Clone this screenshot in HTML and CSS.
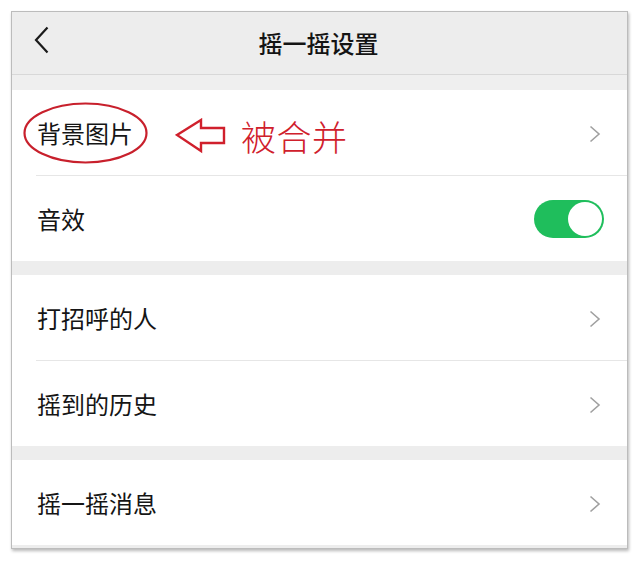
FILE: index.html
```html
<!DOCTYPE html>
<html lang="zh">
<head>
<meta charset="utf-8">
<title>摇一摇设置</title>
<link rel="stylesheet" href="styles.css">
</head>
<body>
<div class="frame">
  <header class="nav">
    <svg class="back" width="16" height="28" viewBox="0 0 16 28"><path d="M13.5 1.5 L2 14 L13.5 26.5" fill="none" stroke="#1a1a1a" stroke-width="2.2"/></svg>
    <h1 class="title">摇一摇设置</h1>
  </header>
  <div class="band"></div>
  <section class="group">
    <div class="row row-annot">
      <span class="label">背景图片</span>
      <svg class="chev" width="12" height="18" viewBox="0 0 12 18"><path d="M1.5 1.5 L10 9 L1.5 16.5" fill="none" stroke="#a0a0a0" stroke-width="1.6"/></svg>
      <svg class="ellipse" width="125" height="62" viewBox="0 0 125 62"><ellipse cx="62.5" cy="31" rx="61" ry="29.5" fill="none" stroke="#c8202c" stroke-width="2.2"/></svg>
      <svg class="arrow" width="52" height="36" viewBox="0 0 52 36"><path d="M2 17 L26 2 L26 10 L49 10 L49 25 L26 25 L26 33 Z" fill="none" stroke="#d0202c" stroke-width="2.4" stroke-linejoin="miter"/></svg>
      <span class="note">被合并</span>
    </div>
    <div class="sep"></div>
    <div class="row">
      <span class="label">音效</span>
      <span class="toggle"><span class="knob"></span></span>
    </div>
  </section>
  <div class="gap"></div>
  <section class="group">
    <div class="row">
      <span class="label">打招呼的人</span>
      <svg class="chev" width="12" height="18" viewBox="0 0 12 18"><path d="M1.5 1.5 L10 9 L1.5 16.5" fill="none" stroke="#a0a0a0" stroke-width="1.6"/></svg>
    </div>
    <div class="sep"></div>
    <div class="row">
      <span class="label">摇到的历史</span>
      <svg class="chev" width="12" height="18" viewBox="0 0 12 18"><path d="M1.5 1.5 L10 9 L1.5 16.5" fill="none" stroke="#a0a0a0" stroke-width="1.6"/></svg>
    </div>
  </section>
  <div class="gap"></div>
  <section class="group">
    <div class="row">
      <span class="label">摇一摇消息</span>
      <svg class="chev" width="12" height="18" viewBox="0 0 12 18"><path d="M1.5 1.5 L10 9 L1.5 16.5" fill="none" stroke="#a0a0a0" stroke-width="1.6"/></svg>
    </div>
  </section>
  <div class="foot"></div>
</div>
</body>
</html>
```

FILE: styles.css
```css
html, body {
  margin: 0;
  padding: 0;
  background: #ffffff;
}
body {
  width: 640px;
  height: 563px;
  overflow: hidden;
  font-family: "Noto Sans CJK SC", "Noto Sans", sans-serif;
  color: #151515;
}
.frame {
  margin: 11px 0 0 11px;
  width: 615px;
  border: 1px solid #bcbcbc;
  box-shadow: 1px 2px 3px rgba(0, 0, 0, 0.28);
  background: #ffffff;
  display: flex;
  flex-direction: column;
}
.nav {
  height: 62px;
  background: #ededed;
  border-bottom: 1px solid #d8d8d8;
  display: flex;
  align-items: center;
  justify-content: center;
  position: relative;
}
.back {
  position: absolute;
  left: 22px;
  top: 14px;
}
.title {
  margin: 0;
  font-size: 24px;
  font-weight: 500;
  line-height: 30px;
  color: #141414;
  padding-right: 2px;
}
.band {
  height: 15px;
  background: #efefef;
}
.gap {
  height: 14px;
  background: #ededed;
}
.foot {
  height: 3px;
  background: #ededed;
}
.group {
  display: flex;
  flex-direction: column;
  background: #ffffff;
}
.row {
  height: 85px;
  display: flex;
  align-items: center;
  justify-content: space-between;
  padding: 0 26px 0 25px;
  position: relative;
}
.label {
  font-size: 24px;
  line-height: 30px;
  color: #151515;
}
.sep {
  height: 1px;
  margin-left: 24px;
  background: #e6e6e6;
}
.chev {
  display: block;
  margin-top: 2px;
}
.toggle {
  width: 70px;
  height: 38px;
  border-radius: 19px;
  background: #1fbe5c;
  margin-right: -3px;
  display: flex;
  align-items: center;
  justify-content: flex-end;
  padding-right: 2px;
  box-sizing: border-box;
}
.knob {
  width: 34px;
  height: 34px;
  border-radius: 50%;
  background: #ffffff;
}
.ellipse {
  position: absolute;
  left: 11px;
  top: 12px;
}
.arrow {
  position: absolute;
  left: 163px;
  top: 28px;
}
.note {
  position: absolute;
  left: 229px;
  top: 24px;
  font-size: 35px;
  font-weight: 300;
  line-height: 44px;
  color: #d0202c;
  letter-spacing: 0.5px;
}
```
